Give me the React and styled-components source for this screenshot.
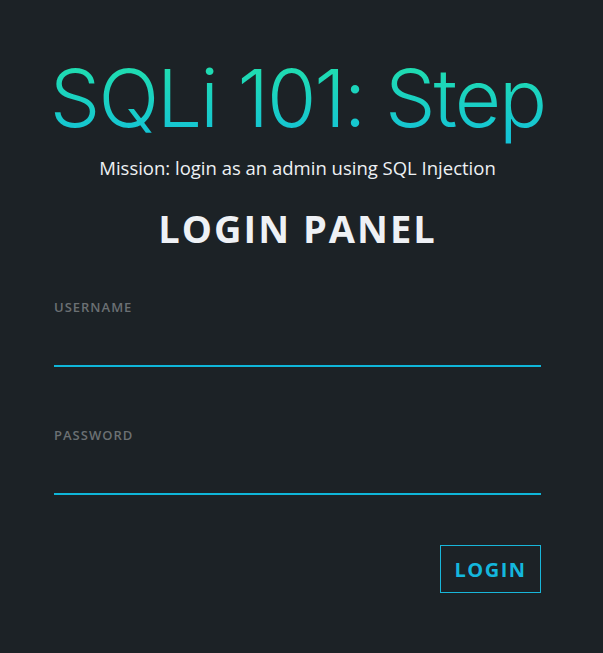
import React from "react";
import styled, { createGlobalStyle } from "styled-components";

const Global = createGlobalStyle`
  html, body { margin: 0; padding: 0; background: #1c2226; }
  body { font-family: "Open Sans", "Noto Sans", sans-serif; min-height: 653px; }
  * { box-sizing: border-box; }
`;

const Page = styled.div`
  min-height: 653px;
  background: #1c2226;
  padding: 50px 62px 0 54px;
  display: flex;
  flex-direction: column;
`;

const Title = styled.h1`
  margin: 0;
  align-self: center;
  text-align: center;
  font-family: "Inter", "Open Sans", sans-serif;
  font-weight: 350;
  font-size: 80px;
  letter-spacing: -2px;
  line-height: 96px;
  background: linear-gradient(180deg, #1fdcb1 20%, #14c3d6 90%);
  -webkit-background-clip: text;
  background-clip: text;
  color: transparent;
  white-space: nowrap;
`;

const Mission = styled.p`
  margin: 9px 0 0;
  text-align: center;
  font-size: 18.5px;
  line-height: 26px;
  color: #eef1f4;
`;

const PanelTitle = styled.h2`
  margin: 22px 0 0;
  text-align: center;
  font-size: 38px;
  line-height: 50px;
  font-weight: 700;
  letter-spacing: 2px;
  color: #eef1f5;
`;

const Form = styled.form`
  margin-top: 45px;
  display: flex;
  flex-direction: column;
`;

const Field = styled.div`
  display: flex;
  flex-direction: column;
  margin-bottom: ${(p) => p.$gap || 0}px;
`;

const Label = styled.label`
  font-size: 13px;
  font-weight: 600;
  letter-spacing: 1px;
  color: #6b7073;
  line-height: 18px;
`;

const Input = styled.input`
  height: 49px;
  margin-top: 2px;
  background: transparent;
  border: none;
  border-bottom: 2px solid #0fb6d9;
  outline: none;
  color: #eef1f5;
  font-family: inherit;
  font-size: 16px;
  padding: 0;
`;

const Actions = styled.div`
  display: flex;
  justify-content: flex-end;
  margin-top: 50px;
`;

const Button = styled.button`
  width: 101px;
  height: 48px;
  background: transparent;
  border: 1px solid #18b6d9;
  color: #14b7dd;
  font-family: inherit;
  font-size: 20px;
  font-weight: 700;
  letter-spacing: 1.5px;
  cursor: pointer;
  padding: 0;
`;

export default function App() {
  return (
    <>
      <Global />
      <Page>
        <Title>SQLi 101: Step</Title>
        <Mission>Mission: login as an admin using SQL Injection</Mission>
        <PanelTitle>LOGIN PANEL</PanelTitle>
        <Form onSubmit={(e) => e.preventDefault()}>
          <Field $gap={59}>
            <Label htmlFor="username">USERNAME</Label>
            <Input id="username" type="text" />
          </Field>
          <Field>
            <Label htmlFor="password">PASSWORD</Label>
            <Input id="password" type="password" />
          </Field>
          <Actions>
            <Button type="submit">LOGIN</Button>
          </Actions>
        </Form>
      </Page>
    </>
  );
}
